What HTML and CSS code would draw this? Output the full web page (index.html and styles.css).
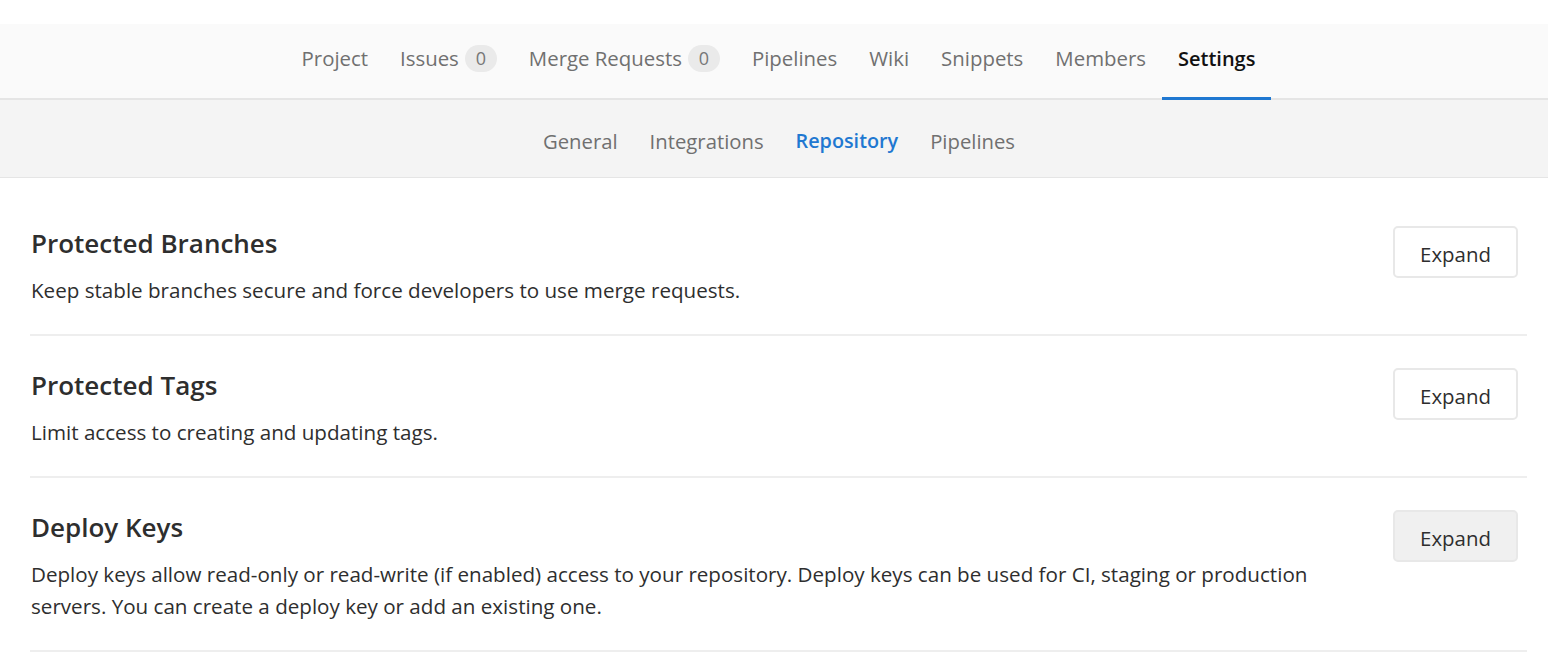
FILE: index.html
```html
<!DOCTYPE html>
<html lang="en">
<head>
<meta charset="utf-8">
<title>Repository Settings</title>
<link rel="stylesheet" href="styles.css">
</head>
<body>
<div class="page">
  <nav class="nav-main">
    <a class="nav-item">Project</a>
    <a class="nav-item">Issues <span class="badge">0</span></a>
    <a class="nav-item">Merge Requests <span class="badge">0</span></a>
    <a class="nav-item">Pipelines</a>
    <a class="nav-item">Wiki</a>
    <a class="nav-item">Snippets</a>
    <a class="nav-item">Members</a>
    <a class="nav-item active">Settings</a>
  </nav>
  <nav class="nav-sub">
    <a class="sub-item">General</a>
    <a class="sub-item">Integrations</a>
    <a class="sub-item active">Repository</a>
    <a class="sub-item">Pipelines</a>
  </nav>
  <main class="content">
    <section class="setting">
      <div class="setting-text">
        <h4 class="setting-title">Protected Branches</h4>
        <p class="setting-desc">Keep stable branches secure and force developers to use merge requests.</p>
      </div>
      <button class="btn">Expand</button>
    </section>
    <section class="setting">
      <div class="setting-text">
        <h4 class="setting-title">Protected Tags</h4>
        <p class="setting-desc">Limit access to creating and updating tags.</p>
      </div>
      <button class="btn">Expand</button>
    </section>
    <section class="setting">
      <div class="setting-text">
        <h4 class="setting-title">Deploy Keys</h4>
        <p class="setting-desc">Deploy keys allow read-only or read-write (if enabled) access to your repository. Deploy keys can be used for CI, staging or production servers. You can create a deploy key or add an existing one.</p>
      </div>
      <button class="btn btn-hover">Expand</button>
    </section>
  </main>
</div>
</body>
</html>
```

FILE: styles.css
```css
* { box-sizing: border-box; }
html, body { margin: 0; padding: 0; background: #fff; }
body {
  font-family: "Open Sans", "Noto Sans", sans-serif;
  color: #2e2e2e;
  font-size: 20.5px;
}
.page { padding-top: 24px; }

.nav-main {
  display: flex;
  justify-content: center;
  height: 76px;
  background: #fafafa;
  border-bottom: 2px solid #e5e5e5;
  padding-left: 9px;
}
.nav-item {
  display: flex;
  align-items: center;
  padding: 0 16px 5px;
  color: #707070;
  font-size: 20.4px;
  margin-bottom: -2px;
  border-bottom: 3px solid transparent;
}
.nav-item.active {
  color: #111;
  font-weight: 600;
  font-size: 20px;
  border-bottom-color: #1f78d1;
}
.badge {
  display: inline-flex;
  align-items: center;
  justify-content: center;
  margin-left: 6px;
  min-width: 32px;
  height: 27px;
  padding: 0 9px;
  border-radius: 14px;
  background: #eaeaea;
  color: #777;
  font-size: 18px;
}

.nav-sub {
  display: flex;
  justify-content: center;
  height: 78px;
  background: #f4f4f4;
  border-bottom: 1px solid #e5e5e5;
  padding-left: 10px;
}
.sub-item {
  display: flex;
  align-items: center;
  padding: 4px 16px 0;
  color: #707070;
  font-size: 20.3px;
}
.sub-item.active {
  color: #1f78d1;
  font-weight: 600;
  font-size: 19.8px;
}

.content {
  padding: 16px 21px 0 30px;
}
.setting {
  display: flex;
  justify-content: space-between;
  align-items: flex-start;
  padding: 32px 9px 28px 1px;
  border-bottom: 2px solid #eeeeee;
}
.setting-text { width: 1340px; }
.setting-title {
  margin: 0;
  font-size: 26px;
  font-weight: 600;
  line-height: 34px;
  color: #2e2e2e;
}
.setting-desc {
  margin: 14px 0 0;
  font-size: 20.6px;
  line-height: 32px;
}
.btn {
  width: 125px;
  height: 52px;
  flex: none;
  background: #fff;
  border: 2px solid #e8e8e8;
  border-radius: 5px;
  padding: 3px 0 0;
  font-family: inherit;
  font-size: 20.4px;
  color: #2e2e2e;
}
.btn-hover { background: #f0f0f0; }
```
